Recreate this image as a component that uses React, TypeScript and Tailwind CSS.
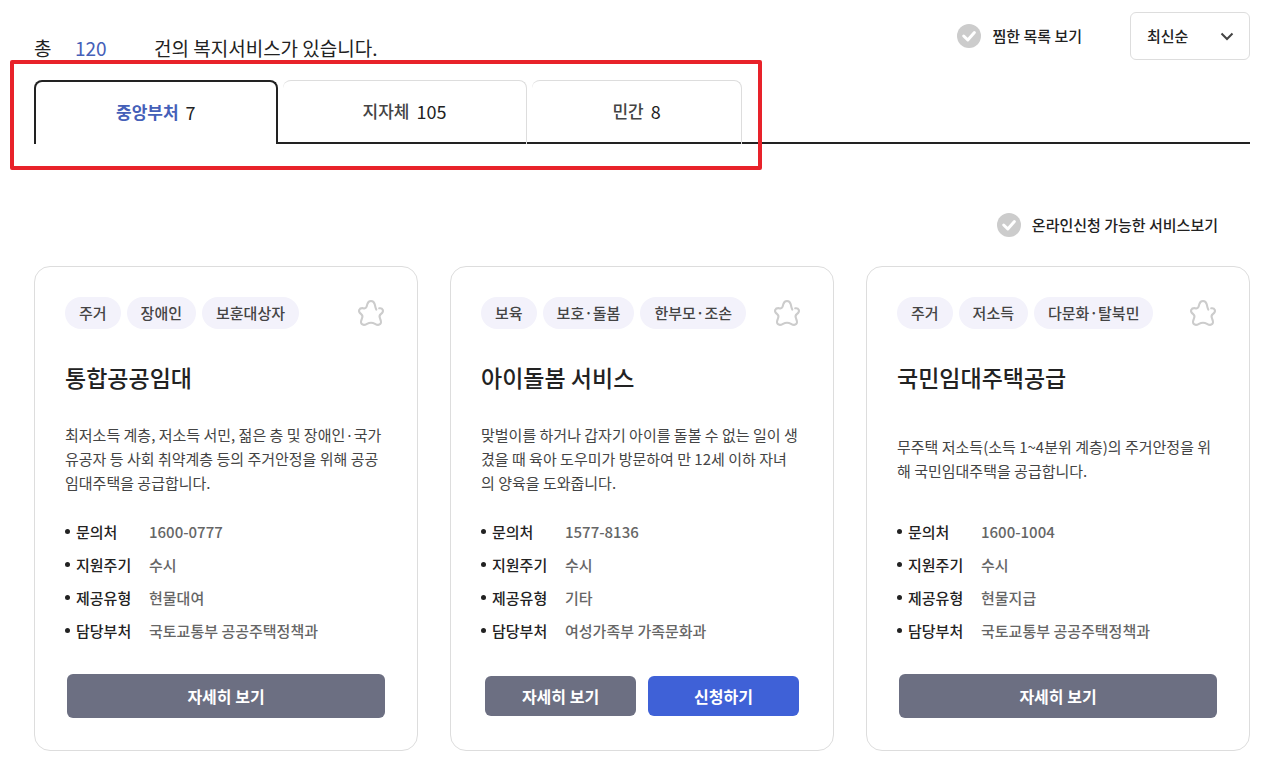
import { useState } from "react";

const tabs = [
  { name: "중앙부처", count: 7 },
  { name: "지자체", count: 105 },
  { name: "민간", count: 8 },
];

const services = [
  {
    title: "통합공공임대",
    tags: ["주거", "장애인", "보훈대상자"],
    description:
      "최저소득 계층, 저소득 서민, 젊은 층 및 장애인·국가유공자 등 사회 취약계층 등의 주거안정을 위해 공공임대주택을 공급합니다.",
    phone: "1600-0777",
    cycle: "수시",
    type: "현물대여",
    department: "국토교통부 공공주택정책과",
    canApply: false,
  },
  {
    title: "아이돌봄 서비스",
    tags: ["보육", "보호·돌봄", "한부모·조손"],
    description:
      "맞벌이를 하거나 갑자기 아이를 돌볼 수 없는 일이 생겼을 때 육아 도우미가 방문하여 만 12세 이하 자녀\n의 양육을 도와줍니다.",
    phone: "1577-8136",
    cycle: "수시",
    type: "기타",
    department: "여성가족부 가족문화과",
    canApply: true,
  },
  {
    title: "국민임대주택공급",
    tags: ["주거", "저소득", "다문화·탈북민"],
    description:
      "무주택 저소득(소득 1~4분위 계층)의 주거안정을 위해 국민임대주택을 공급합니다.",
    phone: "1600-1004",
    cycle: "수시",
    type: "현물지급",
    department: "국토교통부 공공주택정책과",
    canApply: false,
  },
];

const StarIcon = () => (
  <svg viewBox="0 0 26 26" className="size-[26px] overflow-visible" fill="none" stroke="#cccccc" strokeWidth="2.1" strokeLinecap="round" strokeLinejoin="round">
    <path d="M18.3 9.6C17.7 8.4 17.3 7 16.8 4.6C16.2 2.2 15 1 13 1C11 1 9.8 2.2 9.2 4.6C8.6 7.4 8 8.6 6.2 8.4C4 7.9 2 8.2 1.2 9.9C0.4 11.9 1.6 13 3.2 14.2C4.9 15.5 4.9 16.5 4 18.4C2.9 20.7 2.6 22.8 3.8 24.1C5.2 25.4 7 25 9 23.8C11.7 22.3 14.3 22.3 17 23.8C19 25 20.8 25.4 22.2 24.1C23.4 22.8 23.1 20.7 22 18.4C21.1 16.5 21.1 15.5 22.8 14.2C24.4 13 25.6 11.9 24.8 9.9C24.1 8.4 22.6 8 21.2 8.3" />
  </svg>
);

const CheckOption = ({ id, label }: { id: string; label: string }) => {
  return (
    <div className="flex items-center gap-[11px]">
      <span className="relative flex">
        <input
          id={id}
          type="checkbox"
          className="size-6 appearance-none rounded-full bg-[#cccccc] checked:bg-[#3f61d7]"
        />
        <svg viewBox="0 0 24 24" className="pointer-events-none absolute inset-0" fill="none" stroke="white" strokeWidth="3" strokeLinecap="round" strokeLinejoin="round">
          <path d="M6.7 12L10.8 16L17.4 8.6" />
        </svg>
      </span>
      <label htmlFor={id} className="text-[15px] leading-6 font-medium">
        {label}
      </label>
    </div>
  );
};

const InfoRow = ({ label, value }: { label: string; value: string }) => {
  return (
    <div className="flex h-[33px] items-center">
      <span className="mr-[6px] size-[5px] rounded-full bg-[#222222]" />
      <dt className="w-[73px] font-medium">{label}</dt>
      <dd className="font-medium text-[#666666]">{value}</dd>
    </div>
  );
};

const ServiceCard = ({ service }: any) => {
  return (
    <article className="rounded-2xl border border-[#dddddd] p-[30px]">
      <div className="flex items-center justify-between">
        <ul className="flex gap-[6px]">
          {service.tags.map((tag: string) => (
            <li key={tag} className="rounded-full bg-[#f3f2fb] px-[14px] text-[15px] leading-8 font-medium whitespace-nowrap text-[#444444]">
              {tag}
            </li>
          ))}
        </ul>
        <button type="button" aria-label="찜하기" className="mr-[3px]">
          <StarIcon />
        </button>
      </div>
      <h2 className="mt-[30px] text-[23px] leading-9 font-medium">{service.title}</h2>
      <div className="mt-7 flex min-h-[72px] items-center">
        <p className="text-[15px] leading-6 whitespace-pre-line text-[#444444]">{service.description}</p>
      </div>
      <dl className="mt-5 text-[15px] leading-6">
        <InfoRow label="문의처" value={service.phone} />
        <InfoRow label="지원주기" value={service.cycle} />
        <InfoRow label="제공유형" value={service.type} />
        <InfoRow label="담당부처" value={service.department} />
      </dl>
      <div className="mt-[25px] flex h-12 items-center text-base font-bold text-white">
        {service.canApply ? (
          <div className="mx-1 flex flex-1 gap-3">
            <button type="button" className="h-10 flex-1 rounded-md bg-[#6c6f82]">자세히 보기</button>
            <button type="button" className="h-10 flex-1 rounded-md bg-[#3f61d7]">신청하기</button>
          </div>
        ) : (
          <button type="button" className="mx-[2px] h-11 flex-1 rounded-md bg-[#6c6f82]">자세히 보기</button>
        )}
      </div>
    </article>
  );
};

export default function App() {
  const [active, setActive] = useState("중앙부처");

  return (
    <main className="bg-white pt-3 pr-[17px] pb-3 pl-[34px] font-['Noto_Sans_CJK_KR','Noto_Sans',sans-serif] text-[#222222]">
      <header className="flex items-start justify-between">
        <p className="flex pt-[22px] text-[19px] leading-7">
          <span className="w-[41px]">총</span>
          <span className="w-[79px] text-[#4560b8]">120</span>
          <span>건의 복지서비스가 있습니다.</span>
        </p>
        <div className="flex items-center gap-12">
          <CheckOption id="favorites" label="찜한 목록 보기" />
          <div className="relative">
            <select aria-label="정렬" className="h-12 w-[120px] appearance-none rounded-md border border-[#dddddd] bg-white px-4 text-[15px] font-medium">
              <option>최신순</option>
              <option>인기순</option>
            </select>
            <svg viewBox="0 0 14 10" className="pointer-events-none absolute top-5 right-4 h-[10px] w-[14px]" fill="none" stroke="#444444" strokeWidth="2">
              <path d="M1.5 1.5L7 7L12.5 1.5" />
            </svg>
          </div>
        </div>
      </header>

      <div className="relative mt-[18px]">
        <div role="tablist" className="flex h-16 items-stretch gap-[5px] border-b-2 border-[#222222]">
          {tabs.map((tab) => (
            <button
              key={tab.name}
              type="button"
              role="tab"
              aria-selected={active === tab.name}
              onClick={() => setActive(tab.name)}
              className={
                active === tab.name
                  ? "-mb-[2px] flex items-center gap-[7px] rounded-t-lg border-2 border-b-0 border-[#222222] bg-white px-20 pb-[2px]"
                  : "-mb-[2px] flex items-center gap-[7px] rounded-t-lg border-t border-r border-[#dddddd] px-20 pb-[3px]"
              }
            >
              <span className={active === tab.name ? "text-[17px] font-bold text-[#4560b8]" : "text-[17px] font-medium text-[#444444]"}>
                {tab.name}
              </span>
              <span className="text-lg">{tab.count}</span>
            </button>
          ))}
        </div>
        <div className="pointer-events-none absolute -top-5 -left-6 h-[110px] w-[752px] rounded-xs border-4 border-[#e8222a]" />
      </div>

      <div className="mt-[69px] mr-8 flex justify-end">
        <CheckOption id="online" label="온라인신청 가능한 서비스보기" />
      </div>

      <section className="mt-[29px] grid grid-cols-3 gap-8">
        {services.map((service) => (
          <ServiceCard key={service.title} service={service} />
        ))}
      </section>
    </main>
  );
}
